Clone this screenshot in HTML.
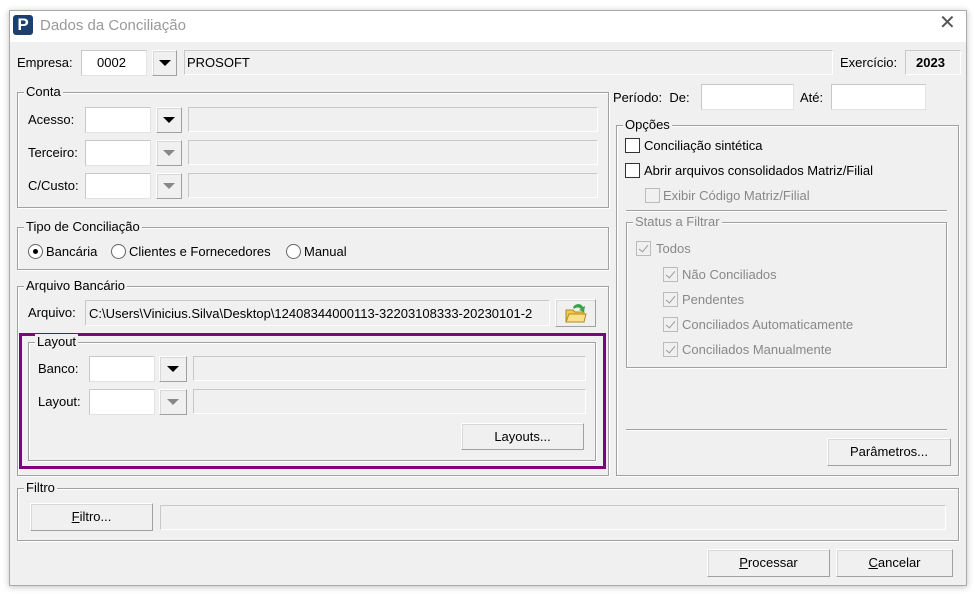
<!DOCTYPE html>
<html><head><meta charset="utf-8"><style>
*{box-sizing:border-box;margin:0;padding:0}
body{width:975px;height:594px;background:#fff;font-family:"Liberation Sans","DejaVu Sans",sans-serif;font-size:13px;color:#000;position:relative;overflow:hidden}
.a{position:absolute}
.win{left:9px;top:10px;width:958px;height:576px;background:#f0f0f0;border:1px solid #aaa;box-shadow:0 1px 6px rgba(0,0,0,.25)}
.title{left:10px;top:11px;width:956px;height:31px;background:#fff}
.lbl{position:absolute;white-space:nowrap;line-height:16px}
.in{position:absolute;background:#fff;border:1px solid #e3e3e3;border-top-color:#c8c8c8;border-left-color:#c8c8c8}
.fld{position:absolute;background:#f0f0f0;border:1px solid #c8c8c8;border-right-color:#fff;border-bottom-color:#fff}
.btn{position:absolute;background:#f0f0f0;border:1px solid #fff;border-right-color:#a0a0a0;border-bottom-color:#a0a0a0;box-shadow:1px 1px 0 #d8d8d8 inset;text-align:center}
.dd::after{content:"";position:absolute;left:50%;top:50%;margin-left:-6px;margin-top:-3px;border-left:6px solid transparent;border-right:6px solid transparent;border-top:6px solid #000}
.dd.dis::after{border-top-color:#888}
.grp{position:absolute;border:1px solid #a0a0a0;box-shadow:1px 1px 0 #fff inset,1px 1px 0 #fff}
.grp>.cap{position:absolute;left:8px;top:-9px;background:#f0f0f0;padding:0 2px;line-height:16px;white-space:nowrap}
.cb{position:absolute;width:15px;height:15px;background:#fff;border:1px solid #333}
.cbe{position:absolute;width:15px;height:15px;background:#f0f0f0;border:1px solid #bbb}
.cbd{position:absolute;width:15px;height:15px;background:#f0f0f0;border:1px solid #bbb}
.cbd::after{content:"";position:absolute;left:4px;top:1px;width:4px;height:8px;border-right:1.5px solid #999;border-bottom:1.5px solid #999;transform:rotate(40deg)}
.rad{position:absolute;width:15px;height:15px;border-radius:50%;background:#fff;border:1px solid #666}
.g{color:#888}
u{text-decoration:underline}
</style></head><body>
<div class="a win"></div>
<div class="a title"></div>
<div class="a" style="left:13px;top:15px;width:20px;height:20px;background:#1b3f6e;border-radius:3px;color:#fff;font-weight:bold;font-size:17px;line-height:20px;text-align:center">P</div>
<div class="lbl" style="left:40px;top:18px;font-size:15px;color:#999">Dados da Conciliação</div>
<div class="lbl" style="left:939px;top:15px;font-size:20px;color:#555">✕</div>

<div class="lbl" style="left:17px;top:55px">Empresa:</div>
<div class="in" style="left:81px;top:50px;width:66px;height:26px"></div>
<div class="lbl" style="left:97px;top:55px">0002</div>
<div class="btn dd" style="left:152px;top:50px;width:25px;height:26px"></div>
<div class="fld" style="left:184px;top:50px;width:649px;height:25px"></div>
<div class="lbl" style="left:187px;top:55px">PROSOFT</div>
<div class="lbl" style="left:840px;top:55px">Exercício:</div>
<div class="fld" style="left:905px;top:50px;width:56px;height:25px"></div>
<div class="lbl" style="left:916px;top:55px;font-weight:bold">2023</div>

<div class="grp" style="left:17px;top:92px;width:592px;height:116px"><span class="cap" style="left:6px">Conta</span></div>
<div class="lbl" style="left:28px;top:112px">Acesso:</div>
<div class="in" style="left:85px;top:107px;width:66px;height:26px"></div>
<div class="btn dd" style="left:156px;top:107px;width:26px;height:26px"></div>
<div class="fld" style="left:188px;top:107px;width:410px;height:25px"></div>
<div class="lbl" style="left:28px;top:145px">Terceiro:</div>
<div class="in" style="left:85px;top:140px;width:66px;height:26px"></div>
<div class="btn dd dis" style="left:156px;top:140px;width:26px;height:26px"></div>
<div class="fld" style="left:188px;top:140px;width:410px;height:25px"></div>
<div class="lbl" style="left:28px;top:178px">C/Custo:</div>
<div class="in" style="left:85px;top:173px;width:66px;height:26px"></div>
<div class="btn dd dis" style="left:156px;top:173px;width:26px;height:26px"></div>
<div class="fld" style="left:188px;top:173px;width:410px;height:25px"></div>

<div class="grp" style="left:17px;top:227px;width:592px;height:43px"><span class="cap" style="left:6px">Tipo de Conciliação</span></div>
<div class="rad" style="left:28px;top:244px"><div class="a" style="left:4px;top:4px;width:5px;height:5px;border-radius:50%;background:#000"></div></div>
<div class="lbl" style="left:46px;top:244px">Bancária</div>
<div class="rad" style="left:111px;top:244px"></div>
<div class="lbl" style="left:129px;top:244px">Clientes e Fornecedores</div>
<div class="rad" style="left:286px;top:244px"></div>
<div class="lbl" style="left:304px;top:244px">Manual</div>

<div class="grp" style="left:17px;top:286px;width:592px;height:190px"><span class="cap" style="left:6px">Arquivo Bancário</span></div>
<div class="lbl" style="left:28px;top:305px">Arquivo:</div>
<div class="fld" style="left:85px;top:300px;width:465px;height:26px;overflow:hidden"><span class="lbl" style="left:3px;top:5px">C:\Users\Vinicius.Silva\Desktop\12408344000113-32203108333-20230101-2</span></div>
<div class="btn" style="left:555px;top:299px;width:41px;height:28px">
<svg width="24" height="22" viewBox="0 0 24 22" style="margin-top:2px"><path d="M2 8h7l2 2h9v10H2z" fill="#f2c84b" stroke="#b08a20"/><path d="M2 20l3-8h17l-2 8z" fill="#fbe08a" stroke="#b08a20"/><path d="M9 5c3-4 8-4 10 0l2-1-1 6-5-2 2-1c-2-2-5-2-7 0z" fill="#3aa34a"/></svg></div>

<div class="a" style="left:19px;top:333px;width:587px;height:136px;border:3px solid #800080"></div>
<div class="grp" style="left:28px;top:342px;width:568px;height:119px"><span class="cap" style="left:6px">Layout</span></div>
<div class="lbl" style="left:38px;top:361px">Banco:</div>
<div class="in" style="left:89px;top:356px;width:66px;height:26px"></div>
<div class="btn dd" style="left:159px;top:356px;width:28px;height:26px"></div>
<div class="fld" style="left:193px;top:356px;width:393px;height:25px"></div>
<div class="lbl" style="left:38px;top:394px">Layout:</div>
<div class="in" style="left:89px;top:389px;width:66px;height:26px"></div>
<div class="btn dd dis" style="left:159px;top:389px;width:28px;height:26px"></div>
<div class="fld" style="left:193px;top:389px;width:393px;height:25px"></div>
<div class="btn" style="left:461px;top:423px;width:123px;height:27px;line-height:25px">Layouts...</div>

<div class="lbl" style="left:613px;top:90px">Período:&nbsp; De:</div>
<div class="in" style="left:701px;top:84px;width:93px;height:26px"></div>
<div class="lbl" style="left:800px;top:90px">Até:</div>
<div class="in" style="left:831px;top:84px;width:95px;height:26px"></div>

<div class="grp" style="left:616px;top:125px;width:343px;height:351px"><span class="cap" style="left:6px">Opções</span></div>
<div class="cb" style="left:625px;top:138px"></div>
<div class="lbl" style="left:644px;top:138px">Conciliação sintética</div>
<div class="cb" style="left:625px;top:163px"></div>
<div class="lbl" style="left:644px;top:163px">Abrir arquivos consolidados Matriz/Filial</div>
<div class="cbe" style="left:645px;top:188px"></div>
<div class="lbl g" style="left:663px;top:188px">Exibir Código Matriz/Filial</div>
<div class="a" style="left:626px;top:210px;width:321px;height:2px;border-top:1px solid #a0a0a0;border-bottom:1px solid #fff"></div>
<div class="grp" style="left:626px;top:222px;width:321px;height:146px"><span class="cap g" style="left:6px">Status a Filtrar</span></div>
<div class="cbd" style="left:636px;top:241px"></div><div class="lbl g" style="left:656px;top:241px">Todos</div>
<div class="cbd" style="left:663px;top:267px"></div><div class="lbl g" style="left:682px;top:267px">Não Conciliados</div>
<div class="cbd" style="left:663px;top:292px"></div><div class="lbl g" style="left:682px;top:292px">Pendentes</div>
<div class="cbd" style="left:663px;top:317px"></div><div class="lbl g" style="left:682px;top:317px">Conciliados Automaticamente</div>
<div class="cbd" style="left:663px;top:342px"></div><div class="lbl g" style="left:682px;top:342px">Conciliados Manualmente</div>
<div class="a" style="left:626px;top:429px;width:321px;height:2px;border-top:1px solid #a0a0a0;border-bottom:1px solid #fff"></div>
<div class="btn" style="left:827px;top:438px;width:124px;height:28px;line-height:26px">Parâmetros...</div>

<div class="grp" style="left:17px;top:488px;width:942px;height:53px"><span class="cap" style="left:6px">Filtro</span></div>
<div class="btn" style="left:30px;top:503px;width:123px;height:28px;line-height:26px"><u>F</u>iltro...</div>
<div class="fld" style="left:160px;top:505px;width:786px;height:25px"></div>

<div class="btn" style="left:707px;top:549px;width:123px;height:28px;line-height:26px"><u>P</u>rocessar</div>
<div class="btn" style="left:836px;top:549px;width:117px;height:28px;line-height:26px"><u>C</u>ancelar</div>
</body></html>
